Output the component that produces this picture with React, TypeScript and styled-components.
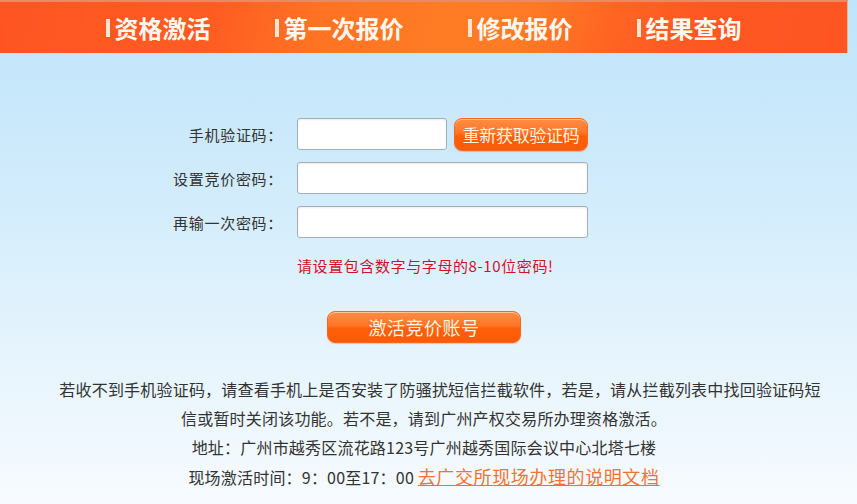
import React, { useState } from "react";
import styled, { createGlobalStyle } from "styled-components";

const GlobalStyle = createGlobalStyle`
  html, body {
    margin: 0;
    padding: 0;
  }
  body {
    font-family: "Noto Sans CJK SC", "Noto Sans", sans-serif;
    background: #f6fbff;
  }
`;

const navItems = ["资格激活", "第一次报价", "修改报价", "结果查询"];

const App: React.FC = (): JSX.Element => {
  const [code, setCode] = useState<string>("");
  const [password, setPassword] = useState<string>("");
  const [repeat, setRepeat] = useState<string>("");

  return (
    <Page>
      <GlobalStyle />
      <Header>
        {navItems.map((item) => (
          <NavItem key={item}>{item}</NavItem>
        ))}
      </Header>

      <Form onSubmit={(e) => e.preventDefault()}>
        <Label htmlFor="code">手机验证码：</Label>
        <FieldRow>
          <Input
            id="code"
            type="text"
            $short
            value={code}
            onChange={(e) => setCode(e.target.value)}
          />
          <OrangeButton type="button" $width={134}>
            重新获取验证码
          </OrangeButton>
        </FieldRow>

        <Label htmlFor="password">设置竞价密码：</Label>
        <FieldRow>
          <Input
            id="password"
            type="password"
            value={password}
            onChange={(e) => setPassword(e.target.value)}
          />
        </FieldRow>

        <Label htmlFor="repeat">再输一次密码：</Label>
        <FieldRow>
          <Input
            id="repeat"
            type="password"
            value={repeat}
            onChange={(e) => setRepeat(e.target.value)}
          />
        </FieldRow>

        <Hint>请设置包含数字与字母的8-10位密码!</Hint>
      </Form>

      <SubmitWrapper>
        <OrangeButton type="submit" $width={194} $big>
          激活竞价账号
        </OrangeButton>
      </SubmitWrapper>

      <Notice>
        <Paragraph>
          若收不到手机验证码，请查看手机上是否安装了防骚扰短信拦截软件，若是，请从拦截列表中找回验证码短
          <br />
          信或暂时关闭该功能。若不是，请到广州产权交易所办理资格激活。
        </Paragraph>
        <Line>地址：广州市越秀区流花路123号广州越秀国际会议中心北塔七楼</Line>
        <Line>
          现场激活时间：9：00至17：00 <DocLink href="#">去广交所现场办理的说明文档</DocLink>
        </Line>
      </Notice>
    </Page>
  );
};

export default App;

const Page = styled.div`
  width: 100%;
  min-height: 504px;
  background: linear-gradient(180deg, #c0e4fa 0%, #cdeafb 30%, #e6f4fd 70%, #f7fbff 100%);
  overflow: hidden;
`;

const Header = styled.nav`
  width: 848px;
  height: 53px;
  box-sizing: border-box;
  border-top: 2px solid #ea8a60;
  border-right: 1px solid #f4b08c;
  display: flex;
  align-items: center;
  justify-content: center;
  gap: 64px;
  background: linear-gradient(
    105deg,
    #fe5522 0%,
    #ff5c22 25%,
    #ff7323 38%,
    #ff7b24 52%,
    #ff7a24 62%,
    #ff6422 72%,
    #fe5822 82%,
    #fe5522 100%
  );
`;

const NavItem = styled.span`
  display: flex;
  align-items: center;
  font-size: 24px;
  font-weight: 700;
  color: #fff8f0;
  line-height: 1;
  padding-top: 1px;

  &::before {
    content: "";
    display: block;
    width: 4px;
    height: 18px;
    margin-right: 5px;
    background: #ffe6d2;
  }
`;

const Form = styled.form`
  width: 848px;
  margin-top: 65px;
  display: grid;
  grid-template-columns: 283px auto;
  column-gap: 14px;
  row-gap: 12px;
  align-items: center;
`;

const Label = styled.label`
  justify-self: end;
  font-size: 15px;
  letter-spacing: 0.7px;
  color: #333;
`;

const FieldRow = styled.div`
  display: flex;
  align-items: center;
  gap: 7px;
  height: 32px;
`;

const Input = styled.input<{ $short?: boolean }>`
  box-sizing: border-box;
  width: ${(p) => (p.$short ? "150px" : "291px")};
  height: 32px;
  border: 1px solid #a5adb5;
  border-radius: 3px;
  background: #fff;
  box-shadow: inset 0 1px 2px rgba(0, 0, 0, 0.08);
  outline: none;
  padding: 0 6px;
  font-size: 14px;
`;

const OrangeButton = styled.button<{ $width: number; $big?: boolean }>`
  box-sizing: border-box;
  width: ${(p) => p.$width}px;
  height: ${(p) => (p.$big ? "32px" : "33px")};
  border: 1px solid #f26a1e;
  border-radius: 8px;
  background: linear-gradient(180deg, #ff8d45 0%, #ff7428 45%, #ff5f0a 55%, #ff5a06 100%);
  box-shadow: inset 0 1px 0 rgba(255, 220, 190, 0.7), 0 1px 1px rgba(200, 90, 30, 0.3);
  color: #fff3e0;
  font-family: "Noto Sans CJK SC", sans-serif;
  font-size: ${(p) => (p.$big ? "18px" : "17px")};
  letter-spacing: ${(p) => (p.$big ? "0.5px" : "-0.3px")};
  padding: 0;
  cursor: pointer;
`;

const Hint = styled.p`
  grid-column: 2;
  margin: 6px 0 0;
  font-size: 15px;
  letter-spacing: 0.6px;
  line-height: 20px;
  color: #d2102c;
`;

const SubmitWrapper = styled.div`
  width: 848px;
  display: flex;
  justify-content: center;
  margin-top: 35px;
`;

const Notice = styled.div`
  width: 820px;
  margin: 32px 0 0 14px;
  text-align: center;
  font-size: 16px;
  letter-spacing: 0.2px;
  line-height: 29px;
  color: #333;
`;

const Paragraph = styled.p`
  margin: 0;
  text-indent: 2em;
`;

const Line = styled.p`
  margin: 0;
`;

const DocLink = styled.a`
  font-size: 18px;
  letter-spacing: 0.6px;
  color: #f2742e;
  text-decoration: underline;
  text-decoration-color: #e0782e;
`;
